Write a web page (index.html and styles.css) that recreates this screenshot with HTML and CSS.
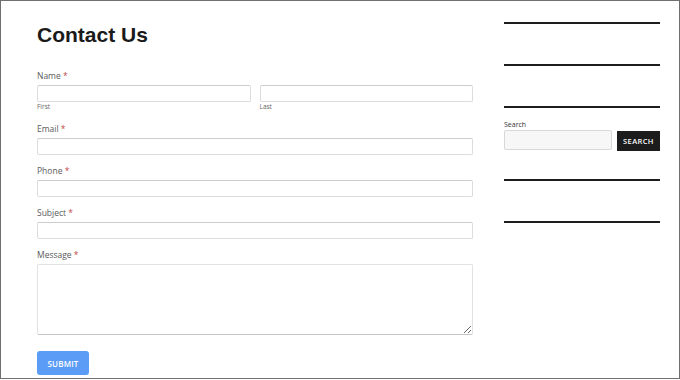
FILE: index.html
```html
<!DOCTYPE html>
<html lang="en">
<head>
<meta charset="utf-8">
<title>Contact Us</title>
<link rel="stylesheet" href="styles.css">
</head>
<body>
<div class="frame">
  <main class="content">
    <h1 class="title">Contact Us</h1>
    <form class="form">
      <div class="field field-name">
        <label class="label">Name <span class="req">*</span></label>
        <div class="name-row">
          <div class="name-part"><input class="input" type="text"><span class="sub">First</span></div>
          <div class="name-part"><input class="input" type="text"><span class="sub">Last</span></div>
        </div>
      </div>
      <div class="field">
        <label class="label">Email <span class="req">*</span></label>
        <input class="input" type="text">
      </div>
      <div class="field">
        <label class="label">Phone <span class="req">*</span></label>
        <input class="input" type="text">
      </div>
      <div class="field">
        <label class="label">Subject <span class="req">*</span></label>
        <input class="input" type="text">
      </div>
      <div class="field field-msg">
        <label class="label">Message <span class="req">*</span></label>
        <textarea class="textarea"></textarea>
      </div>
      <button class="submit" type="button">Submit</button>
    </form>
  </main>
  <aside class="sidebar">
    <div class="widget"></div>
    <div class="widget"></div>
    <div class="widget widget-search">
      <label class="search-label">Search</label>
      <div class="search-row">
        <input class="search-input" type="text">
        <button class="search-btn" type="button">Search</button>
      </div>
    </div>
    <div class="widget"></div>
    <div class="widget"></div>
  </aside>
</div>
</body>
</html>
```

FILE: styles.css
```css
html, body {
  margin: 0;
  padding: 0;
  background: #fff;
}

.frame {
  display: flex;
  gap: 31px;
  width: 680px;
  height: 379px;
  box-sizing: border-box;
  border: 1px solid #707070;
  padding-left: 36px;
  overflow: hidden;
  font-family: "Open Sans", "Noto Sans", sans-serif;
}

.content {
  width: 436px;
  padding-top: 22px;
  flex: none;
}

.title {
  margin: 0;
  font-family: "Liberation Sans", Arial, sans-serif;
  font-weight: bold;
  font-size: 21px;
  line-height: 24px;
  color: #1a1a1a;
}

.form {
  margin: 22.5px 0 0;
}

.field {
  margin-bottom: 9.5px;
}

.field-name {
  margin-bottom: 12px;
}

.label {
  display: block;
  font-size: 8.5px;
  line-height: 12px;
  color: #5a5a5a;
  margin-bottom: 3.5px;
}

.req {
  color: #c0474a;
}

.name-row {
  display: grid;
  grid-template-columns: 1fr 1fr;
  gap: 9px;
}

.input {
  display: block;
  width: 100%;
  height: 17px;
  box-sizing: border-box;
  margin: 0;
  border: 1px solid #dcdcdc;
  border-top-color: #cdcdcd;
  border-radius: 2px;
  background: #fff;
  padding: 0 4px;
}

.sub {
  display: block;
  font-size: 6.5px;
  line-height: 8px;
  margin-top: 0.5px;
  color: #666;
}

.textarea {
  display: block;
  width: 100%;
  height: 71px;
  box-sizing: border-box;
  margin: 0;
  border: 1px solid #e2e2e2;
  border-bottom-color: #c4c4c4;
  border-radius: 2px;
  background: #fff;
  resize: vertical;
}

.submit {
  display: block;
  margin-top: 16px;
  width: 52px;
  height: 24px;
  border: 0;
  border-radius: 3px;
  background: #5a9cf6;
  color: #fff;
  font-family: "Open Sans", sans-serif;
  font-weight: 600;
  font-size: 8px;
  text-transform: uppercase;
  letter-spacing: 0.2px;
  padding: 0;
}

.sidebar {
  width: 156px;
  flex: none;
  padding-top: 21px;
}

.widget {
  height: 42px;
  box-sizing: border-box;
  border-top: 2px solid #1d1d1d;
}

.widget-search {
  height: 73px;
  padding-top: 11px;
}

.search-label {
  display: block;
  font-size: 7px;
  line-height: 11px;
  color: #333;
}

.search-row {
  display: flex;
  gap: 5px;
  align-items: flex-start;
}

.search-input {
  flex: 1;
  min-width: 0;
  height: 20px;
  box-sizing: border-box;
  margin: 0;
  border: 1px solid #d8d8d8;
  border-radius: 2px;
  background: #f7f7f7;
}

.search-btn {
  width: 43px;
  height: 20px;
  margin-top: 1px;
  border: 0;
  background: #1c1c1c;
  color: #fff;
  font-family: "Open Sans", sans-serif;
  font-weight: 600;
  font-size: 7.5px;
  letter-spacing: 0.4px;
  text-transform: uppercase;
  padding: 0;
}
```
